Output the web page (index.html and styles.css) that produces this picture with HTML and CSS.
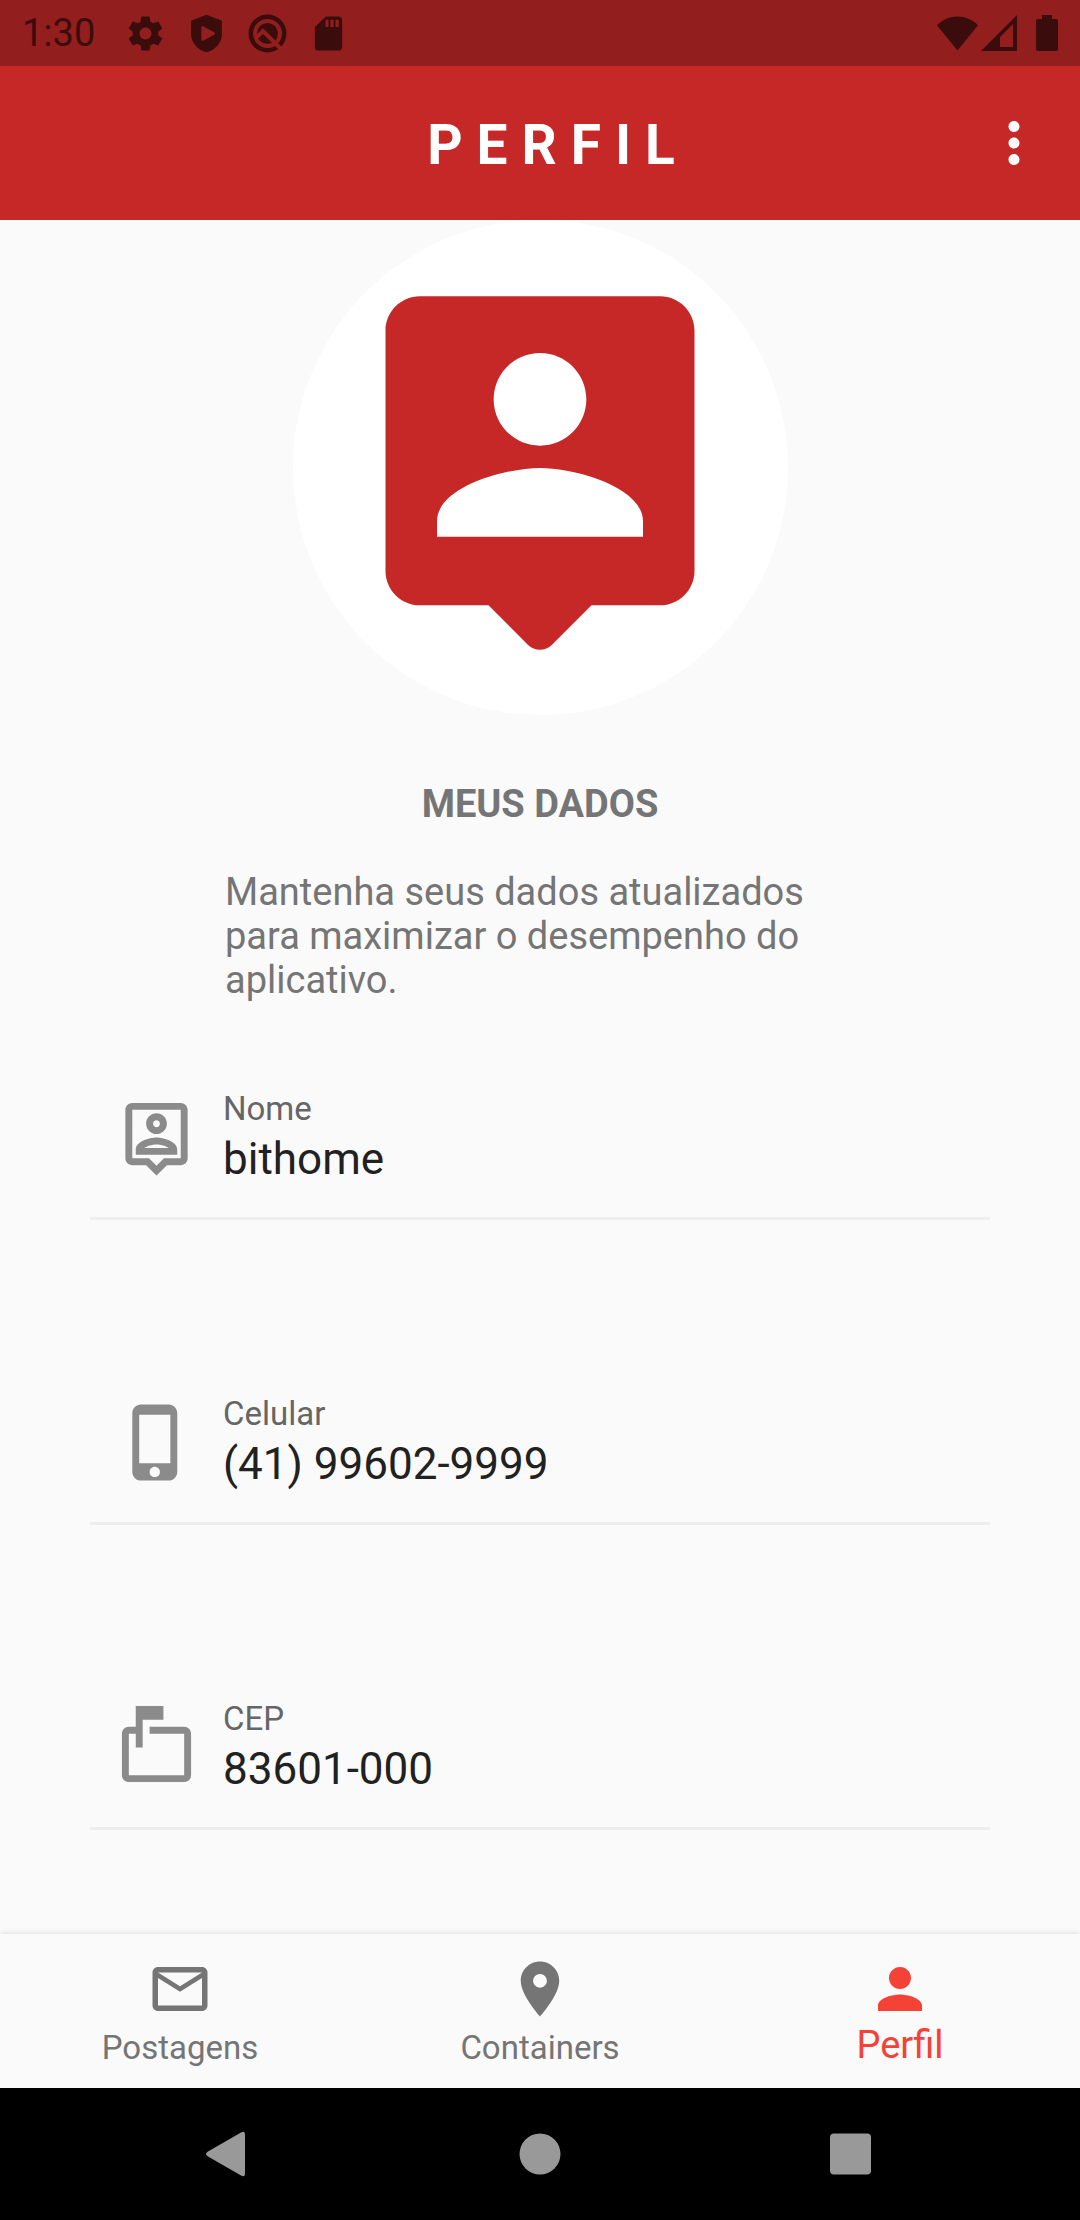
FILE: index.html
```html
<!DOCTYPE html>
<html lang="pt-BR">
<head>
<meta charset="utf-8">
<meta name="viewport" content="width=device-width, initial-scale=1">
<title>Perfil</title>
<link rel="stylesheet" href="styles.css">
</head>
<body>
<div class="status-bar">
  <span class="clock">1:30</span>
  <div class="status-icons">
    <svg viewBox="0 0 24 24"><path d="M19.43 12.98c.04-.32.07-.64.07-.98s-.03-.66-.07-.98l2.11-1.65c.19-.15.24-.42.12-.64l-2-3.46c-.12-.22-.39-.3-.61-.22l-2.49 1c-.52-.4-1.08-.73-1.69-.98l-.38-2.65C14.46 2.18 14.25 2 14 2h-4c-.25 0-.46.18-.49.42l-.38 2.65c-.61.25-1.17.59-1.69.98l-2.49-1c-.23-.09-.49 0-.61.22l-2 3.46c-.13.22-.07.49.12.64l2.11 1.65c-.04.32-.07.65-.07.98s.03.66.07.98l-2.11 1.65c-.19.15-.24.42-.12.64l2 3.46c.12.22.39.3.61.22l2.49-1c.52.4 1.08.73 1.69.98l.38 2.65c.03.24.24.42.49.42h4c.25 0 .46-.18.49-.42l.38-2.65c.61-.25 1.17-.59 1.69-.98l2.49 1c.23.09.49 0 .61-.22l2-3.46c.12-.22.07-.49-.12-.64l-2.11-1.65zM12 15.5c-1.93 0-3.5-1.57-3.5-3.5s1.57-3.5 3.5-3.5 3.5 1.57 3.5 3.5-1.57 3.5-3.5 3.5z"/></svg>
    <svg viewBox="0 0 24 24"><path fill-rule="evenodd" d="M12 1 3 4.500v8c0 5 3.800 9.200 9 10.500 5.200-1.300 9-5.500 9-10.500v-8zM9 8.500q0-1.200 1-.7l6.500 3.500q1 .7 0 1.400L10 16.200q-1 .4-1-.7z"/></svg>
    <svg viewBox="0 0 41 41"><path fill-rule="evenodd" d="M20.500 1.500a19 19 0 1 0 0 38 19 19 0 1 0 0-38zm0 4.500a14.500 14.500 0 1 1 0 29 14.500 14.500 0 1 1 0-29z"/><circle cx="20.500" cy="20.500" r="10.500"/><path class="cut" d="m9 25 7-7 18 18"/></svg>
    <svg viewBox="0 0 24 24"><path d="M18 2h-7.500L4 8.200V20c0 1.100.9 2 2 2h12c1.100 0 2-.9 2-2V4c0-1.100-.9-2-2-2zm-6 6.200h-1.700V4H12v4.200zm3 0h-1.900V4H15v4.200zm3 0h-1.900V4H18v4.200z"/></svg>
  </div>
  <div class="signal-icons">
    <svg class="wifi" viewBox="0 0 42 36"><path d="M0 10C11-2 31-2 42 10L21 36z"/></svg>
    <svg class="cell" viewBox="0 0 36 36"><path fill-rule="evenodd" d="M36 0v36H0zM32 9 19 22v10h13z"/></svg>
    <svg class="battery" viewBox="0 0 22 36"><path d="M6 0h10v4h4a2 2 0 0 1 2 2v28a2 2 0 0 1-2 2H2a2 2 0 0 1-2-2V6a2 2 0 0 1 2-2h4z"/></svg>
  </div>
</div>

<header class="app-bar">
  <h1 class="app-title">PERFIL</h1>
  <button class="menu-button" type="button" aria-label="Mais opções">
    <svg viewBox="0 0 24 24"><path d="M12 8c1.100 0 2-.9 2-2s-.9-2-2-2-2 .9-2 2 .9 2 2 2zm0 2c-1.100 0-2 .9-2 2s.9 2 2 2 2-.9 2-2-.9-2-2-2zm0 6c-1.100 0-2 .9-2 2s.9 2 2 2 2-.9 2-2-.9-2-2-2z"/></svg>
  </button>
</header>

<main class="content">
  <div class="avatar">
    <svg viewBox="0 0 24 24"><path d="M19 2H5c-1.100 0-2 .9-2 2v14c0 1.100.9 2 2 2h4l2.290 2.290c.39.39 1.020.39 1.410 0L15 20h4c1.100 0 2-.9 2-2V4c0-1.100-.9-2-2-2zm-7 3.300c1.490 0 2.700 1.210 2.700 2.700s-1.210 2.700-2.700 2.700S9.300 9.490 9.300 8s1.210-2.700 2.700-2.700zM18 16H6v-.9c0-2 4-3.100 6-3.100s6 1.100 6 3.100v.9z"/></svg>
  </div>
  <h2 class="section-title">MEUS DADOS</h2>
  <p class="intro">Mantenha seus dados atualizados para maximizar o desempenho do aplicativo.</p>

  <form class="fields">
    <div class="field">
      <svg viewBox="0 0 24 24"><path d="M19 2H5c-1.110 0-2 .9-2 2v14c0 1.100.89 2 2 2h4l3 3 3-3h4c1.100 0 2-.9 2-2V4c0-1.100-.9-2-2-2zm0 16h-4.830l-.59.59L12 20.170l-1.590-1.590-.58-.58H5V4h14v14zm-7-7c1.650 0 3-1.350 3-3s-1.350-3-3-3-3 1.350-3 3 1.350 3 3 3zm0-4c.55 0 1 .45 1 1s-.45 1-1 1-1-.45-1-1 .45-1 1-1zm6 8.580c0-2.500-3.970-3.580-6-3.580s-6 1.080-6 3.580V17h12v-1.420zM8.480 15c.74-.51 2.230-1 3.520-1 1.300 0 2.780.49 3.520 1H8.480z"/></svg>
      <div class="field-text">
        <label for="nome">Nome</label>
        <input id="nome" type="text" value="bithome">
      </div>
    </div>
    <div class="field">
      <svg viewBox="0 0 24 24"><path d="M15.500 1h-8C6.120 1 5 2.120 5 3.500v17C5 21.880 6.120 23 7.500 23h8c1.380 0 2.500-1.120 2.500-2.500v-17C18 2.120 16.880 1 15.500 1zm-4 21c-.83 0-1.500-.67-1.500-1.500s.67-1.500 1.500-1.500 1.500.67 1.500 1.500-.67 1.500-1.500 1.500zm4.500-4H7V4h9v14z"/></svg>
      <div class="field-text">
        <label for="celular">Celular</label>
        <input id="celular" type="tel" value="(41) 99602-9999">
      </div>
    </div>
    <div class="field">
      <svg viewBox="0 0 24 24"><path d="M20 6H10v2h10v12H4V8h2v4h2V4h6V0H6v6H4c-1.100 0-2 .9-2 2v12c0 1.100.9 2 2 2h16c1.100 0 2-.9 2-2V8c0-1.100-.9-2-2-2z"/></svg>
      <div class="field-text">
        <label for="cep">CEP</label>
        <input id="cep" type="text" value="83601-000">
      </div>
    </div>
  </form>
</main>

<nav class="tabs">
  <a class="tab" href="#postagens">
    <svg viewBox="0 0 24 24"><path d="M22 6c0-1.100-.9-2-2-2H4c-1.100 0-2 .9-2 2v12c0 1.100.9 2 2 2h16c1.100 0 2-.9 2-2V6zm-2 0l-8 5-8-5h16zm0 12H4V8l8 5 8-5v10z"/></svg>
    <span>Postagens</span>
  </a>
  <a class="tab" href="#containers">
    <svg viewBox="0 0 24 24"><path d="M12 2C8.130 2 5 5.130 5 9c0 5.250 7 13 7 13s7-7.750 7-13c0-3.870-3.130-7-7-7zm0 9.500c-1.380 0-2.500-1.120-2.500-2.500s1.120-2.500 2.500-2.500 2.500 1.120 2.500 2.500-1.120 2.500-2.500 2.500z"/></svg>
    <span>Containers</span>
  </a>
  <a class="tab tab-active" href="#perfil" aria-current="page">
    <svg viewBox="0 0 24 24"><path d="M12 12c2.210 0 4-1.790 4-4s-1.790-4-4-4-4 1.790-4 4 1.790 4 4 4zm0 2c-2.670 0-8 1.340-8 4v2h16v-2c0-2.660-5.330-4-8-4z"/></svg>
    <span>Perfil</span>
  </a>
</nav>

<div class="system-nav">
  <button type="button" aria-label="Voltar"><svg viewBox="0 0 46 46"><path d="M36 1.500Q40 -1 40 4v38q0 5-4 2.500L3 25.500q-4-2.500 0-5z"/></svg></button>
  <button type="button" aria-label="Início"><svg viewBox="0 0 46 46"><circle cx="23" cy="23" r="20.500"/></svg></button>
  <button type="button" aria-label="Recentes"><svg viewBox="0 0 46 46"><rect x="1" y="2.500" width="41" height="41" rx="4"/></svg></button>
</div>
</body>
</html>
```

FILE: styles.css
```css
* {
  box-sizing: border-box;
}

body {
  margin: 0;
  min-height: 100vh;
  display: flex;
  flex-direction: column;
  background: #fafafa;
  color: #757575;
  font-family: Roboto, "Liberation Sans", sans-serif;
}

svg {
  display: block;
  flex: none;
  fill: currentColor;
}

button {
  padding: 0;
  border: 0;
  background: none;
  color: inherit;
}

/* Status bar */
.status-bar {
  height: 66px;
  padding: 0 22px;
  display: flex;
  align-items: center;
  gap: 30px;
  background: #931e1e;
  color: #3b0c0c;
}

.clock {
  font-size: 38px;
  line-height: 68px;
}

.status-icons {
  flex: 1;
  display: flex;
  gap: 20px;
}

.status-icons svg {
  width: 41px;
  height: 41px;
}

.cut {
  fill: none;
  stroke: #931e1e;
  stroke-width: 4;
}

.signal-icons {
  display: flex;
  gap: 3px;
}

.wifi {
  width: 41px;
  height: 36px;
}

.cell {
  width: 36px;
  height: 36px;
}

.battery {
  width: 22px;
  height: 36px;
  margin-left: 16px;
}

/* App bar */
.app-bar {
  height: 154px;
  padding-left: 168px;
  display: flex;
  align-items: center;
  background: #c62828;
  color: #fff;
}

.app-title {
  flex: 1;
  margin: 0;
  padding-top: 4px;
  font-size: 55px;
  line-height: 66px;
  font-weight: 700;
  letter-spacing: 14px;
  text-align: center;
}

.menu-button {
  width: 132px;
  height: 132px;
  display: grid;
  place-items: center;
}

.menu-button svg {
  width: 66px;
  height: 66px;
}

/* Profile */
.content {
  flex: 1;
  padding: 0 90px;
}

.avatar {
  width: 495px;
  height: 495px;
  margin: 0 auto;
  display: grid;
  place-items: center;
  border-radius: 50%;
  background: #fff;
  color: #c62828;
}

.avatar svg {
  width: 412px;
  height: 412px;
}

.section-title {
  margin: 67px 0 44px;
  font-size: 38px;
  line-height: 44px;
  font-weight: 700;
  text-align: center;
}

.intro {
  max-width: 630px;
  margin: 0 auto 87px;
  font-size: 38px;
  line-height: 44px;
}

.fields {
  display: flex;
  flex-direction: column;
  gap: 174px;
}

.field {
  padding: 0 25px 32px;
  display: flex;
  align-items: center;
  gap: 25px;
  border-bottom: 3px solid #eee;
  color: #8b8b8b;
}

.field svg {
  width: 83px;
  height: 83px;
}

.field-text {
  flex: 1;
  display: flex;
  flex-direction: column;
  gap: 4px;
}

.field label {
  font-size: 33px;
  line-height: 40px;
  color: #666;
}

.field input {
  width: 100%;
  height: 52px;
  padding: 0;
  border: 0;
  outline: 0;
  background: none;
  color: #212121;
  font-family: inherit;
  font-size: 44px;
  line-height: 52px;
}

/* Tabs */
.tabs {
  height: 154px;
  display: flex;
  background: #fafafa;
  box-shadow: 0 -1px 5px rgba(0, 0, 0, 0.1);
}

.tab {
  flex: 1;
  padding-top: 22px;
  display: flex;
  flex-direction: column;
  align-items: center;
  gap: 6px;
  color: #757575;
  font-size: 33px;
  line-height: 40px;
  text-decoration: none;
}

.tab svg {
  width: 66px;
  height: 66px;
}

.tab-active {
  color: #f44336;
  font-size: 38px;
  line-height: 34px;
}

/* System navigation */
.system-nav {
  height: 132px;
  display: flex;
  justify-content: center;
  background: #000;
  color: #999;
}

.system-nav button {
  width: 312px;
  display: grid;
  place-items: center;
}

.system-nav svg {
  width: 46px;
  height: 46px;
}
```
